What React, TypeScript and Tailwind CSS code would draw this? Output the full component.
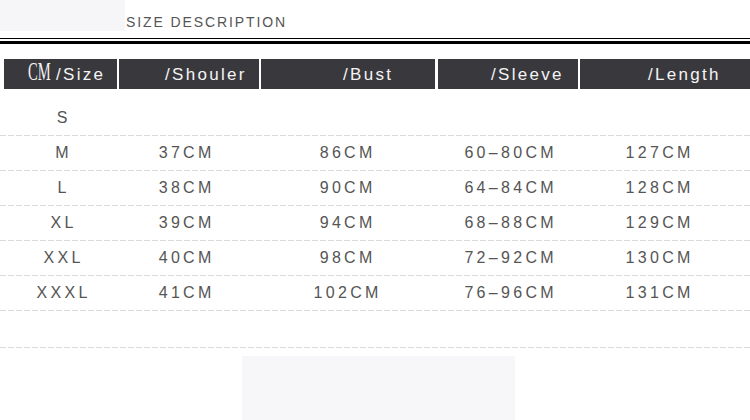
import React from "react";

const dash =
  "h-px w-full bg-[linear-gradient(to_right,#d9d9d9_6px,transparent_6px)] bg-[length:8px_1px] bg-repeat-x";

const rows = [
  ["S", "", "", "", ""],
  ["M", "37CM", "86CM", "60–80CM", "127CM"],
  ["L", "38CM", "90CM", "64–84CM", "128CM"],
  ["XL", "39CM", "94CM", "68–88CM", "129CM"],
  ["XXL", "40CM", "98CM", "72–92CM", "130CM"],
  ["XXXL", "41CM", "102CM", "76–96CM", "131CM"],
];

const heads = [
  { label: "/Shouler", cls: "w-[140px] ml-[2px] pl-[46px]" },
  { label: "/Bust", cls: "w-[174px] ml-[2px] pl-[82px]" },
  { label: "/Sleeve", cls: "w-[140px] ml-[3px] pl-[53px]" },
  { label: "/Length", cls: "w-[170px] ml-[2px] pl-[68px]" },
];

function App() {
  return (
    <div className="w-[750px] h-[420px] overflow-hidden bg-white font-['Liberation_Sans',Arial,sans-serif]">
      {/* title */}
      <div className="flex h-[38px]">
        <div className="w-[125px] h-[31px] bg-[#f6f6f8]" />
        <span className="ml-px pt-[14px] text-[14px] leading-[16px] tracking-[1.9px] text-[#555]">
          SIZE DESCRIPTION
        </span>
      </div>
      <div className="h-px bg-black" />
      <div className="h-[3px] mt-[2px] bg-black" />

      {/* header bar */}
      <div className="flex mt-[15px] h-[30px] pl-[4px] text-[17px] tracking-[2.3px] text-[#f4f4f4]">
        <div className="w-[113px] bg-[#39383d] flex items-center pl-[24px] pt-[2px]">
          <span className="inline-block w-[24px] mb-[6px] leading-none font-['Liberation_Serif',serif] text-[26px] tracking-normal">
            <span className="inline-block origin-left scale-x-[0.56] whitespace-nowrap">CM</span>
          </span>
          <span className="ml-[4px]">/Size</span>
        </div>
        {heads.map((h) => (
          <div key={h.label} className={`${h.cls} bg-[#39383d] flex items-center pt-[2px]`}>
            {h.label}
          </div>
        ))}
      </div>

      {/* rows */}
      <div className="mt-[12px]">
        {rows.map((r) => (
          <div key={r[0]}>
            <div className="grid grid-cols-[124px_122px_200px_126px_172px] h-[34px] items-center text-[16px] tracking-[3.3px] text-[#555]">
              {r.map((c, i) => (
                <div key={i} className="text-center pl-[3.3px]">
                  {c}
                </div>
              ))}
            </div>
            <div className={dash} />
          </div>
        ))}
        <div className="h-[36px]" />
        <div className={dash} />
      </div>

      <div className="ml-[242px] mt-[8px] w-[273px] h-[64px] bg-[#f7f7f9]" />
    </div>
  );
}

export default App;
